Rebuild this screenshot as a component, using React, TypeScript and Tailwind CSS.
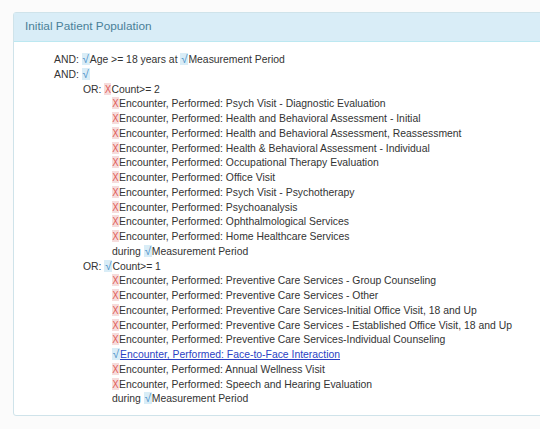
import React from 'react';

type Row = { indent: number; pre?: string; mark?: 'ok' | 'no'; text: string; link?: boolean; post?: { mark: 'ok' | 'no'; text: string } };

const rows: Row[] = [
  { indent: 0, pre: 'AND: ', mark: 'ok', text: 'Age >= 18 years at ', post: { mark: 'ok', text: 'Measurement Period' } },
  { indent: 0, pre: 'AND: ', mark: 'ok', text: '' },
  { indent: 1, pre: 'OR: ', mark: 'no', text: 'Count>= 2' },
  { indent: 2, mark: 'no', text: 'Encounter, Performed: Psych Visit - Diagnostic Evaluation' },
  { indent: 2, mark: 'no', text: 'Encounter, Performed: Health and Behavioral Assessment - Initial' },
  { indent: 2, mark: 'no', text: 'Encounter, Performed: Health and Behavioral Assessment, Reassessment' },
  { indent: 2, mark: 'no', text: 'Encounter, Performed: Health & Behavioral Assessment - Individual' },
  { indent: 2, mark: 'no', text: 'Encounter, Performed: Occupational Therapy Evaluation' },
  { indent: 2, mark: 'no', text: 'Encounter, Performed: Office Visit' },
  { indent: 2, mark: 'no', text: 'Encounter, Performed: Psych Visit - Psychotherapy' },
  { indent: 2, mark: 'no', text: 'Encounter, Performed: Psychoanalysis' },
  { indent: 2, mark: 'no', text: 'Encounter, Performed: Ophthalmological Services' },
  { indent: 2, mark: 'no', text: 'Encounter, Performed: Home Healthcare Services' },
  { indent: 2, pre: 'during ', mark: 'ok', text: 'Measurement Period' },
  { indent: 1, pre: 'OR: ', mark: 'ok', text: 'Count>= 1' },
  { indent: 2, mark: 'no', text: 'Encounter, Performed: Preventive Care Services - Group Counseling' },
  { indent: 2, mark: 'no', text: 'Encounter, Performed: Preventive Care Services - Other' },
  { indent: 2, mark: 'no', text: 'Encounter, Performed: Preventive Care Services-Initial Office Visit, 18 and Up' },
  { indent: 2, mark: 'no', text: 'Encounter, Performed: Preventive Care Services - Established Office Visit, 18 and Up' },
  { indent: 2, mark: 'no', text: 'Encounter, Performed: Preventive Care Services-Individual Counseling' },
  { indent: 2, mark: 'ok', text: 'Encounter, Performed: Face-to-Face Interaction', link: true },
  { indent: 2, mark: 'no', text: 'Encounter, Performed: Annual Wellness Visit' },
  { indent: 2, mark: 'no', text: 'Encounter, Performed: Speech and Hearing Evaluation' },
  { indent: 2, pre: 'during ', mark: 'ok', text: 'Measurement Period' },
];

function Mark({ kind }: { kind: 'ok' | 'no' }) {
  return kind === 'ok'
    ? <span className="inline-block w-[8px] text-center bg-[#d9edf7] text-[#4a90c8] text-[11.5px] leading-[12px]">√</span>
    : <span className="inline-block w-[7px] text-center bg-[#f6dcdc] text-[#e0625e] text-[10.5px] leading-[12px] font-['DejaVu_Sans_Condensed','DejaVu_Sans',sans-serif]">X</span>;
}

const pads = ['pl-0', 'pl-[29px]', 'pl-[58px]'];

export default function App() {
  return (
    <div className="min-h-[429px] bg-[#fbfbfb] overflow-hidden pt-[12px] pl-[13px] font-['Liberation_Sans',Arial,sans-serif]">
      <div className="w-[540px] border border-[#cfe3ea] rounded-[3px] bg-white">
        <div className="h-[29px] bg-[#d9edf7] border-b border-[#bce8f1] px-[11px] flex items-center text-[11.8px] text-[#4a7f98]">
          Initial Patient Population
        </div>
        <div className="pt-[11px] pb-[8px] pl-[40px] text-[10.4px] leading-[14.75px] text-[#333]">
          {rows.map((r, i) => (
            <div key={i} className={`${pads[r.indent]} whitespace-nowrap`}>
              {r.pre}
              {r.mark && <Mark kind={r.mark} />}
              {r.link ? <span className="text-[#2b3fc4] underline">{r.text}</span> : r.text}
              {r.post && <><Mark kind={r.post.mark} />{r.post.text}</>}
            </div>
          ))}
        </div>
      </div>
    </div>
  );
}
